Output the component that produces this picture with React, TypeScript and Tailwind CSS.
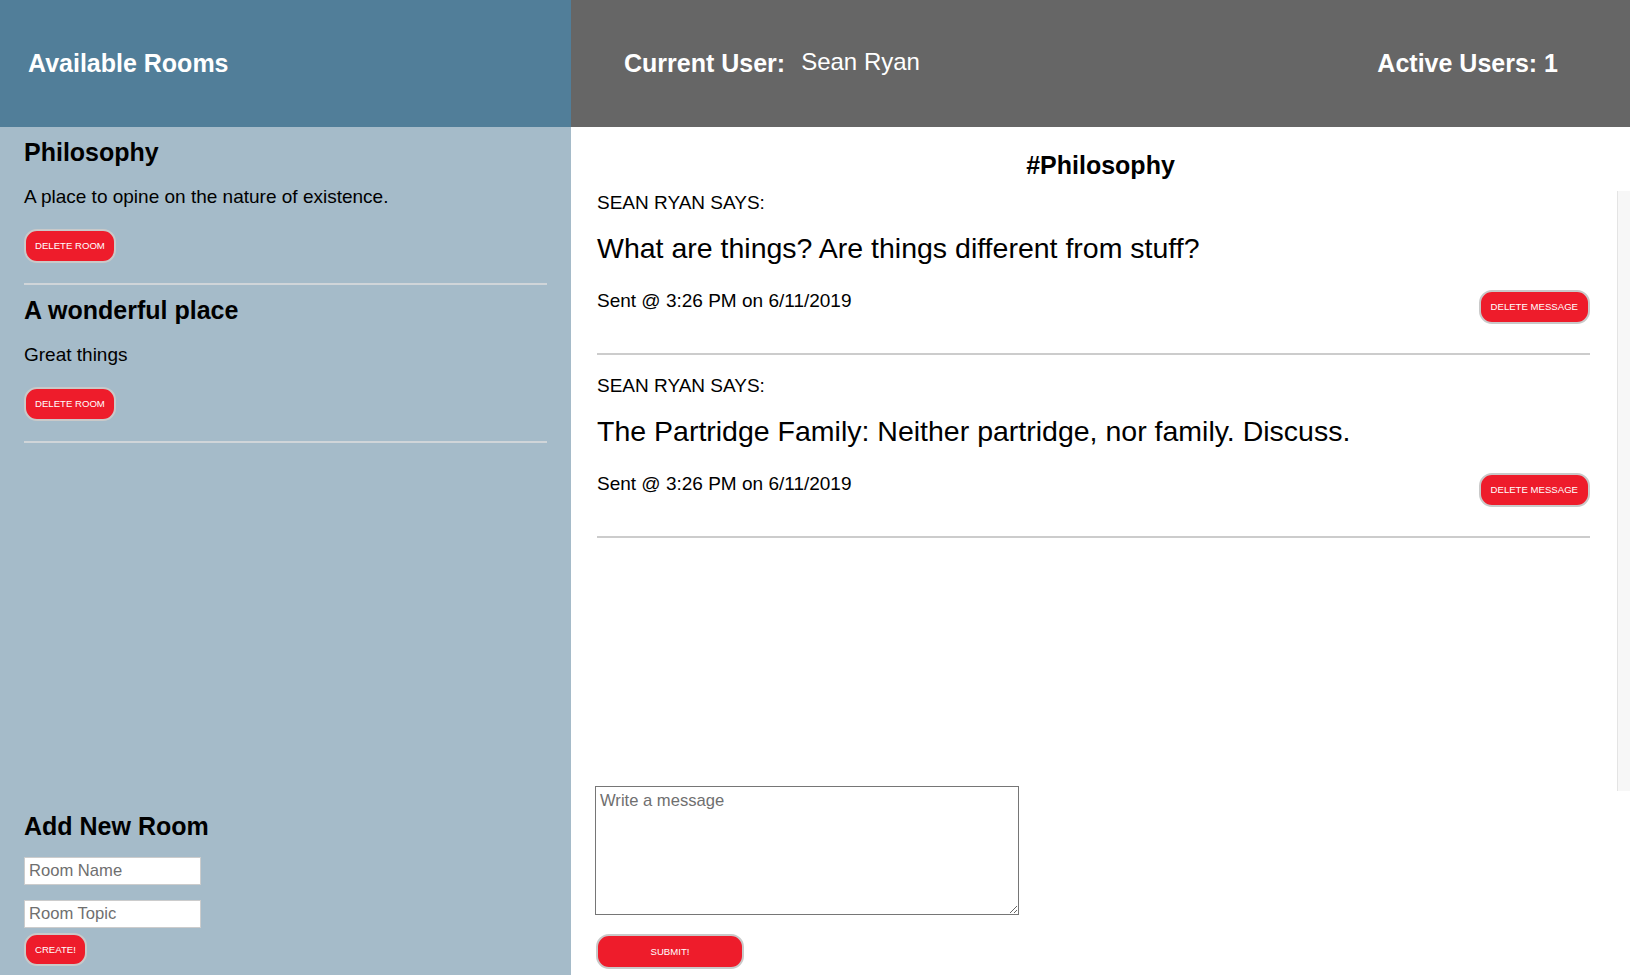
import { useState } from "react";

type Room = { name: string; topic: string };
type Message = { user: string; text: string; sent: string };

const rooms: Room[] = [
  { name: "Philosophy", topic: "A place to opine on the nature of existence." },
  { name: "A wonderful place", topic: "Great things" },
];

const messages: Message[] = [
  {
    user: "Sean Ryan",
    text: "What are things? Are things different from stuff?",
    sent: "Sent @ 3:26 PM on 6/11/2019",
  },
  {
    user: "Sean Ryan",
    text: "The Partridge Family: Neither partridge, nor family. Discuss.",
    sent: "Sent @ 3:26 PM on 6/11/2019",
  },
];

const redButton =
  "bg-[#ee1c2b] text-white text-[9.6px] leading-none uppercase border-2 border-[#c9c9c9] rounded-[13px]";

const App = () => {
  // form state
  const [roomName, setRoomName] = useState("");
  const [roomTopic, setRoomTopic] = useState("");
  const [draft, setDraft] = useState("");

  return (
    <div className="flex h-screen w-full overflow-hidden font-['Liberation_Sans',Arial,sans-serif] text-black">
      {/* Sidebar */}
      <aside className="w-[571px] shrink-0 flex flex-col bg-[#a5bbc9]">
        <div className="h-[127px] shrink-0 flex items-center pl-[28px] bg-[#517e99] text-white text-[25px] font-bold">
          Available Rooms
        </div>

        <div className="flex-1 flex flex-col px-[24px]">
          <div className="flex-1">
            {rooms.map((room) => (
              <div key={room.name} className="pt-[11px] pb-[20px] border-b-2 border-[#d0d5d9]">
                <h2 className="text-[25px] leading-[29px] font-bold">{room.name}</h2>
                <p className="mt-[19px] text-[19px] leading-[22px]">{room.topic}</p>
                <button className={`${redButton} mt-[21px] h-[34px] px-[9px]`}>Delete Room</button>
              </div>
            ))}
          </div>

          <div className="pb-[9px]">
            <h2 className="text-[25px] leading-[29px] font-bold">Add New Room</h2>
            <input
              value={roomName}
              onChange={(e) => setRoomName(e.target.value)}
              placeholder="Room Name"
              className="block mt-[16px] w-[177px] h-[28px] px-[4px] bg-white border border-[#cccccc] text-[16.6px] placeholder:text-[#6f6f6f] outline-none"
            />
            <input
              value={roomTopic}
              onChange={(e) => setRoomTopic(e.target.value)}
              placeholder="Room Topic"
              className="block mt-[15px] w-[177px] h-[28px] px-[4px] bg-white border border-[#cccccc] text-[16.6px] placeholder:text-[#6f6f6f] outline-none"
            />
            <button className={`${redButton} mt-[5px] h-[33px] px-[9px]`}>Create!</button>
          </div>
        </div>
      </aside>

      {/* Chat */}
      <main className="flex-1 flex flex-col bg-white">
        <div className="h-[127px] shrink-0 flex items-center justify-between pl-[53px] pr-[72px] bg-[#666666] text-white text-[25px]">
          <div className="flex items-center">
            <span className="font-bold">Current User:</span>
            <span className="ml-[16px] mb-[4px] text-[24px]">Sean Ryan</span>
          </div>
          <span className="font-bold">Active Users: 1</span>
        </div>

        <h2 className="pt-[24px] text-center text-[25px] leading-[29px] font-bold">#Philosophy</h2>

        <div className="mt-[11px] h-[600px] flex">
          <div className="flex-1 flex flex-col gap-[20px] pt-[1px] pl-[26px] pr-[27px]">
            {messages.map((m, i) => (
              <div key={i} className="pb-[29px] border-b-2 border-[#cccccc]">
                <div className="text-[19px] leading-[22px] uppercase">{m.user} says:</div>
                <div className="mt-[18px] text-[28.5px] leading-[33px]">{m.text}</div>
                <div className="mt-[25px] flex justify-between items-start">
                  <span className="text-[19px] leading-[22px]">{m.sent}</span>
                  <button className={`${redButton} h-[34px] px-[10px]`}>Delete Message</button>
                </div>
              </div>
            ))}
          </div>
          <div className="w-[13px] shrink-0 bg-[#f7f7f7] border-l border-[#e4e4e4]" />
        </div>

        <div className="-mt-[5px] pl-[24px] flex flex-col items-start">
          <textarea
            value={draft}
            onChange={(e) => setDraft(e.target.value)}
            placeholder="Write a message"
            className="w-[424px] h-[129px] px-[4px] py-[2px] border border-[#767676] text-[16.6px] placeholder:text-[#6f6f6f] outline-none"
          />
          <button className={`${redButton} mt-[19px] ml-[1px] w-[148px] h-[35px]`}>Submit!</button>
        </div>
      </main>
    </div>
  );
};

export default App;
